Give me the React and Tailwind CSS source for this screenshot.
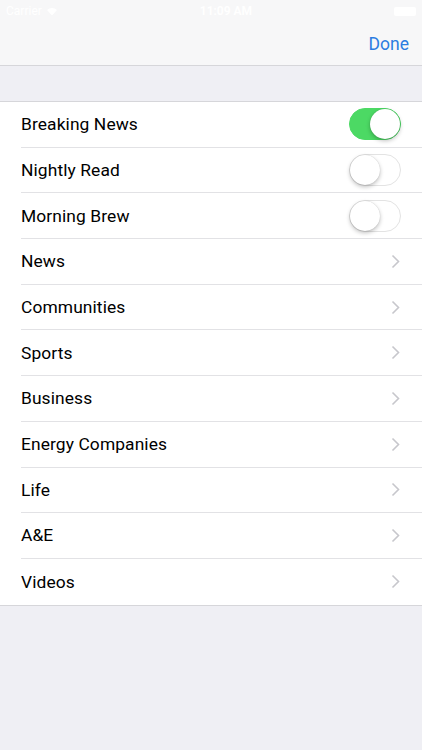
import { useState } from "react";

const rows = [
  { label: "Breaking News", type: "toggle", on: true },
  { label: "Nightly Read", type: "toggle", on: false },
  { label: "Morning Brew", type: "toggle", on: false },
  { label: "News" },
  { label: "Communities" },
  { label: "Sports" },
  { label: "Business" },
  { label: "Energy Companies" },
  { label: "Life" },
  { label: "A&E" },
  { label: "Videos" },
];

function Toggle({ on, onClick }) {
  return (
    <button
      onClick={onClick}
      className={
        "relative h-[32px] w-[52px] rounded-full border " +
        (on ? "border-[#4cd964] bg-[#4cd964]" : "border-[#e3e3e3] bg-white")
      }
    >
      <span
        className={
          "absolute top-[0px] h-[30px] w-[30px] rounded-full bg-white shadow-[0_2px_4px_rgba(0,0,0,0.25),0_0_1px_rgba(0,0,0,0.2)] " +
          (on ? "left-[20px]" : "left-[0px]")
        }
      />
    </button>
  );
}

function Chevron() {
  return (
    <svg width="9" height="15" viewBox="0 0 9 15" className="mr-[1px]">
      <path d="M1.5 1.5 L7.5 7.5 L1.5 13.5" fill="none" stroke="#c7c7cc" strokeWidth="1.6" />
    </svg>
  );
}

export default function App() {
  const [toggles, setToggles] = useState([true, false, false]);

  return (
    <div
      className="min-h-[750px] bg-[#efeff4] text-black"
      style={{ fontFamily: "Roboto, 'Liberation Sans', sans-serif" }}
    >
      {/* NAV BAR */}
      <div className="h-[66px] border-b border-[#d6d6da] bg-[#f7f7f8]">
        <div className="flex h-[22px] items-center justify-between px-[6px] text-[12px] text-white">
          <span className="flex items-center gap-1">
            Carrier
            <svg width="12" height="9" viewBox="0 0 12 9">
              <path d="M6 8.5 L1 3 A7 7 0 0 1 11 3 Z" fill="#ffffff" />
            </svg>
          </span>
          <span className="font-semibold">11:09 AM</span>
          <span className="h-[9px] w-[22px] rounded-[2px] bg-white" />
        </div>
        <div className="flex h-[44px] items-center justify-end px-[13px]">
          <span className="text-[17.5px] text-[#2b7de1]">Done</span>
        </div>
      </div>

      {/* TABLE */}
      <div className="mt-[35px] border-y border-[#d6d6da] bg-white">
        {rows.map((row, i) => (
          <div key={row.label} className="pl-[21px]">
            <div
              className={
                "flex h-[45.7px] items-center justify-between pr-[21px] " +
                (i < rows.length - 1 ? "border-b border-[#e2e2e5]" : "")
              }
            >
              <span className="text-[17.4px] tracking-[0.1px]">{row.label}</span>
              {row.type === "toggle" ? (
                <Toggle
                  on={toggles[i]}
                  onClick={() =>
                    setToggles((t) => t.map((v, j) => (j === i ? !v : v)))
                  }
                />
              ) : (
                <Chevron />
              )}
            </div>
          </div>
        ))}
      </div>
    </div>
  );
}
